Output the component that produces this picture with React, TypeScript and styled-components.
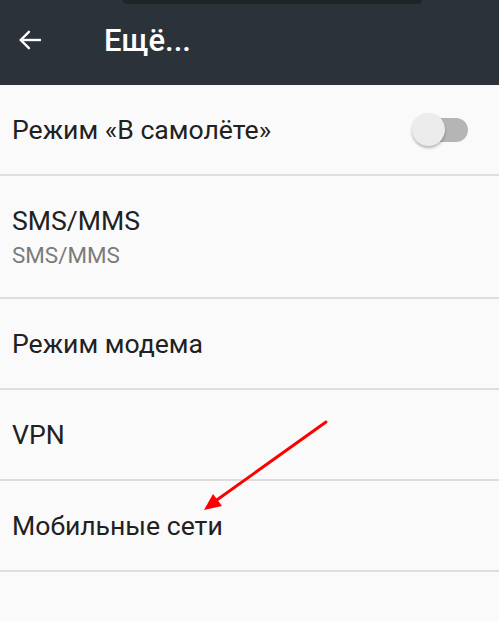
import React from "react";
import styled, { createGlobalStyle } from "styled-components";

const Global = createGlobalStyle`
  html, body { margin: 0; padding: 0; background: #fafafa; }
  body { font-family: Roboto, "Noto Sans", Arial, sans-serif; }
  * { box-sizing: border-box; }
`;

const Screen = styled.div`
  position: relative;
  width: 499px;
  height: 621px;
  overflow: hidden;
  background: #fafafa;
`;

const Notch = styled.div`
  position: absolute;
  top: 0;
  left: 123px;
  width: 299px;
  height: 4px;
  background: #202427;
  border-radius: 0 0 5px 5px;
`;

const Header = styled.header`
  height: 85px;
  background: #2c323a;
  display: flex;
  align-items: center;
  padding: 0 0 5px 16px;
  gap: 60px;
`;

const BackButton = styled.div`
  width: 28px;
  height: 28px;
  display: flex;
  align-items: center;
  justify-content: center;
  color: #fff;
`;

const Title = styled.h1`
  margin: 0;
  color: #fff;
  font-size: 31px;
  font-weight: 500;
  letter-spacing: 0;
`;

const List = styled.div`
  display: flex;
  flex-direction: column;
`;

const Row = styled.div<{ $tall?: boolean }>`
  height: ${(p) => (p.$tall ? 123 : 91)}px;
  border-bottom: 2px solid #dedede;
  display: flex;
  align-items: center;
  justify-content: space-between;
  padding: 0 31px 0 12px;
`;

const Texts = styled.div`
  display: flex;
  flex-direction: column;
  gap: 6px;
`;

const Primary = styled.div`
  font-size: 26.6px;
  color: #212121;
  line-height: 30px;
`;

const Secondary = styled.div`
  font-size: 22.4px;
  color: #7b7b7b;
  line-height: 26px;
`;

const Switch = styled.div`
  position: relative;
  width: 56px;
  height: 34px;
  display: flex;
  align-items: center;
`;

const Track = styled.div`
  width: 52px;
  height: 24px;
  margin-left: 4px;
  border-radius: 12px;
  background: #b5b5b5;
`;

const Thumb = styled.div`
  position: absolute;
  left: 0;
  top: 0;
  width: 33px;
  height: 33px;
  border-radius: 50%;
  background: #ececec;
  box-shadow: 0 2px 3px rgba(0, 0, 0, 0.28);
`;

const Annotation = styled.svg`
  position: absolute;
  left: 0;
  top: 0;
  pointer-events: none;
`;

const rows: { title: string; sub?: string; toggle?: boolean }[] = [
  { title: "Режим «В самолёте»", toggle: true },
  { title: "SMS/MMS", sub: "SMS/MMS" },
  { title: "Режим модема" },
  { title: "VPN" },
  { title: "Мобильные сети" },
];

export default function App() {
  return (
    <Screen>
      <Global />
      <Header>
        <BackButton>
          <svg width="26" height="26" viewBox="0 0 24 24" fill="none" stroke="#fff" strokeWidth="2.2" strokeLinecap="square">
            <path d="M21 12H4" />
            <path d="M11 4.5L3.5 12L11 19.5" strokeLinecap="round" strokeLinejoin="miter" />
          </svg>
        </BackButton>
        <Title>Ещё...</Title>
      </Header>
      <List>
        {rows.map((r) => (
          <Row key={r.title} $tall={!!r.sub}>
            <Texts>
              <Primary>{r.title}</Primary>
              {r.sub && <Secondary>{r.sub}</Secondary>}
            </Texts>
            {r.toggle && (
              <Switch>
                <Track />
                <Thumb />
              </Switch>
            )}
          </Row>
        ))}
      </List>
      <Notch />
      <Annotation width="499" height="621" viewBox="0 0 499 621">
        <line x1="326" y1="422" x2="214" y2="502" stroke="#ff0000" strokeWidth="3" strokeLinecap="round" />
        <polygon points="204,510 213,494 222,506" fill="#ff0000" />
      </Annotation>
    </Screen>
  );
}
